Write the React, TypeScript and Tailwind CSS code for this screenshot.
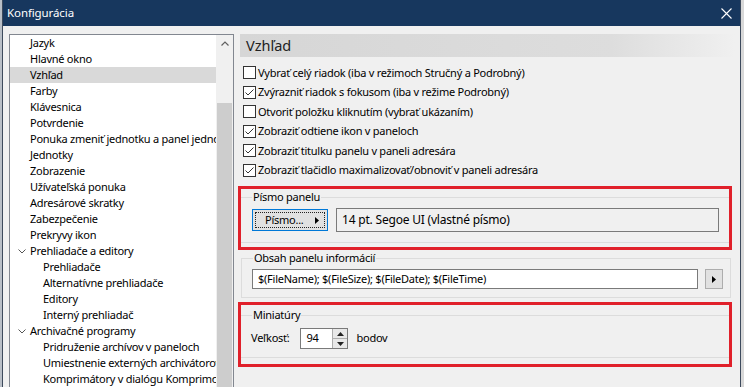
import React from "react"

type TreeItem = { label: string; level: 0 | 1; expanded?: boolean; selected?: boolean }

const treeItems: TreeItem[] = [
  { label: "Jazyk", level: 0 },
  { label: "Hlavné okno", level: 0 },
  { label: "Vzhľad", level: 0, selected: true },
  { label: "Farby", level: 0 },
  { label: "Klávesnica", level: 0 },
  { label: "Potvrdenie", level: 0 },
  { label: "Ponuka zmeniť jednotku a panel jednotiek", level: 0 },
  { label: "Jednotky", level: 0 },
  { label: "Zobrazenie", level: 0 },
  { label: "Užívateľská ponuka", level: 0 },
  { label: "Adresárové skratky", level: 0 },
  { label: "Zabezpečenie", level: 0 },
  { label: "Prekryvy ikon", level: 0 },
  { label: "Prehliadače a editory", level: 0, expanded: true },
  { label: "Prehliadače", level: 1 },
  { label: "Alternatívne prehliadače", level: 1 },
  { label: "Editory", level: 1 },
  { label: "Interný prehliadač", level: 1 },
  { label: "Archivačné programy", level: 0, expanded: true },
  { label: "Pridruženie archívov v paneloch", level: 1 },
  { label: "Umiestnenie externých archivátorov", level: 1 },
  { label: "Komprimátory v dialógu Komprimovať", level: 1 },
]

const options = [
  { label: "Vybrať celý riadok (iba v režimoch Stručný a Podrobný)", checked: false },
  { label: "Zvýrazniť riadok s fokusom (iba v režime Podrobný)", checked: true },
  { label: "Otvoriť položku kliknutím (vybrať ukázaním)", checked: false },
  { label: "Zobraziť odtiene ikon v paneloch", checked: true },
  { label: "Zobraziť titulku panelu v paneli adresára", checked: true },
  { label: "Zobraziť tlačidlo maximalizovať/obnoviť v paneli adresára", checked: true },
]

function Checkbox({ checked }: { checked: boolean }) {
  return (
    <div className="w-[13px] h-[13px] shrink-0 border border-[#333333] bg-white flex items-center justify-center">
      {checked && (
        <svg width="11" height="11" viewBox="0 0 11 11">
          <polyline points="1.5,5.5 4,8 9.5,2.5" fill="none" stroke="#333333" strokeWidth="1" />
        </svg>
      )}
    </div>
  )
}

function Legend({ children }: { children: React.ReactNode }) {
  return <div className="-mt-[9px] ml-[11px] w-fit px-[1px] h-[16px] leading-[16px] bg-[#f0f0f0]">{children}</div>
}

function ArrowRight() {
  return (
    <svg width="4" height="7" viewBox="0 0 4 7">
      <polygon points="0,0 4,3.5 0,7" fill="#000" />
    </svg>
  )
}

export default function App() {
  return (
    <div className="w-[744px] h-[387px] overflow-hidden flex bg-[#d6d9dd] text-[11px] tracking-[-0.25px] text-black font-['Noto_Sans',sans-serif]">
      {/* strip of the window behind */}
      <div className="w-[2px] shrink-0 bg-[#b9bfc7]" />

      {/* dialog window */}
      <div className="w-[739px] shrink-0 flex flex-col border-x border-[#3d4a5c] bg-[#f0f0f0]">
        {/* title bar */}
        <div className="h-[26px] shrink-0 bg-[#17375e] flex items-center justify-between pl-[4px] pr-[8px]">
          <span className="text-white text-[11.5px] tracking-[-0.1px] leading-none">Konfigurácia</span>
          <svg width="11" height="11" viewBox="0 0 11 11">
            <path d="M0.5 0.5 L10.5 10.5 M10.5 0.5 L0.5 10.5" stroke="#ffffff" strokeWidth="1.1" />
          </svg>
        </div>

        {/* body */}
        <div className="flex flex-1 min-h-0 pt-[8px] pl-[6px]">
          {/* tree view */}
          <div className="w-[225px] shrink-0 h-[420px] border border-[#828790] bg-white flex">
            <div className="w-[206px] overflow-hidden">
              {treeItems.map((item) => (
                <div
                  key={item.label}
                  className={
                    "h-[16px] leading-[16px] whitespace-nowrap flex items-center " +
                    (item.selected ? "bg-[#d9d9d9] " : "") +
                    (item.level === 1 ? "pl-[33px]" : "pl-[8px]")
                  }
                >
                  {item.level === 0 && (
                    <div className="w-[12px] shrink-0 flex items-center">
                      {item.expanded && (
                        <svg width="8" height="5" viewBox="0 0 8 5">
                          <polyline points="0.5,0.5 4,4 7.5,0.5" fill="none" stroke="#555555" strokeWidth="1" />
                        </svg>
                      )}
                    </div>
                  )}
                  <span>{item.label}</span>
                </div>
              ))}
            </div>
            {/* scrollbar */}
            <div className="w-[17px] shrink-0 bg-[#f0f0f0] flex flex-col">
              <div className="h-[17px] flex items-center justify-center">
                <svg width="8" height="5" viewBox="0 0 8 5">
                  <polyline points="0.5,4.5 4,1 7.5,4.5" fill="none" stroke="#606060" strokeWidth="1.2" />
                </svg>
              </div>
              <div className="h-[51px]" />
              <div className="flex-1 mx-[1px] bg-[#cdcdcd]" />
            </div>
          </div>

          {/* settings page */}
          <div className="w-[495px] shrink-0 ml-[6px] flex flex-col">
            <div className="h-[23px] flex items-center pl-[6px] text-[14.5px] tracking-normal text-[#222] bg-linear-to-r from-[#d6d6d6] via-[#dddddd] via-75% to-[#f0f0f0]">
              Vzhľad
            </div>

            <div className="mt-[6px] pl-[3px] flex flex-col">
              {options.map((o) => (
                <div key={o.label} className="h-[19.5px] flex items-center gap-[2px] whitespace-nowrap">
                  <Checkbox checked={o.checked} />
                  <span>{o.label}</span>
                </div>
              ))}
            </div>

            {/* Písmo panelu */}
            <div className="mt-[6px] -ml-[2px] w-[494px] h-[64px] border-[3px] border-[#e0202a]">
              <div className="mt-[8px] h-[46px] border-y border-[#dcdcdc]">
                <Legend>Písmo panelu</Legend>
                <div className="mt-[4px] ml-[11px] flex gap-[8px]">
                  <div className="w-[76px] h-[22px] border border-[#0078d7] bg-[#e1e1e1] p-[2px]">
                    <div className="h-full border border-dotted border-[#222] flex items-center pl-[9px] pr-[5px] justify-between">
                      <span>Písmo...</span>
                      <ArrowRight />
                    </div>
                  </div>
                  <div className="w-[383px] h-[24px] -mt-[1px] border border-[#7a7a7a] bg-[#f0f0f0] flex items-center pl-[5px] text-[12px] tracking-[-0.2px]">
                    14 pt. Segoe UI (vlastné písmo)
                  </div>
                </div>
              </div>
            </div>

            {/* Obsah panelu informácií */}
            <div className="mt-[8px] ml-[1px] w-[490px] h-[40px] border border-[#dcdcdc]">
              <Legend>Obsah panelu informácií</Legend>
              <div className="mt-[3px] ml-[10px] flex gap-[7px]">
                <div className="w-[446px] h-[20px] border border-[#7a7a7a] bg-white flex items-center pl-[5px] whitespace-nowrap">
                  $(FileName); $(FileSize); $(FileDate); $(FileTime)
                </div>
                <div className="w-[18px] h-[20px] border border-[#adadad] bg-[#e1e1e1] flex items-center justify-center">
                  <ArrowRight />
                </div>
              </div>
            </div>

            {/* Miniatúry */}
            <div className="mt-[4px] -ml-[2px] w-[494px] h-[65px] border-[3px] border-[#e0202a]">
              <div className="mt-[10px] h-[43px] border-y border-[#dcdcdc]">
                <Legend>Miniatúry</Legend>
                <div className="mt-[5px] pl-[10px] flex items-center">
                  <span>Veľkosť:</span>
                  <div className="ml-[11px] w-[48px] h-[21px] border border-[#7a7a7a] bg-white flex">
                    <div className="flex-1 flex items-center pl-[5px]">94</div>
                    <div className="w-[15px] flex flex-col border-l border-[#adadad]">
                      <div className="flex-1 bg-[#e8e8e8] border-b border-[#adadad] flex items-center justify-center">
                        <svg width="7" height="4" viewBox="0 0 7 4">
                          <polygon points="0,4 3.5,0 7,4" fill="#222" />
                        </svg>
                      </div>
                      <div className="flex-1 bg-[#e8e8e8] flex items-center justify-center">
                        <svg width="7" height="4" viewBox="0 0 7 4">
                          <polygon points="0,0 3.5,4 7,0" fill="#222" />
                        </svg>
                      </div>
                    </div>
                  </div>
                  <span className="ml-[8px]">bodov</span>
                </div>
              </div>
            </div>
          </div>
        </div>
      </div>

      <div className="flex-1 bg-[#d8d8d8]" />
    </div>
  )
}
